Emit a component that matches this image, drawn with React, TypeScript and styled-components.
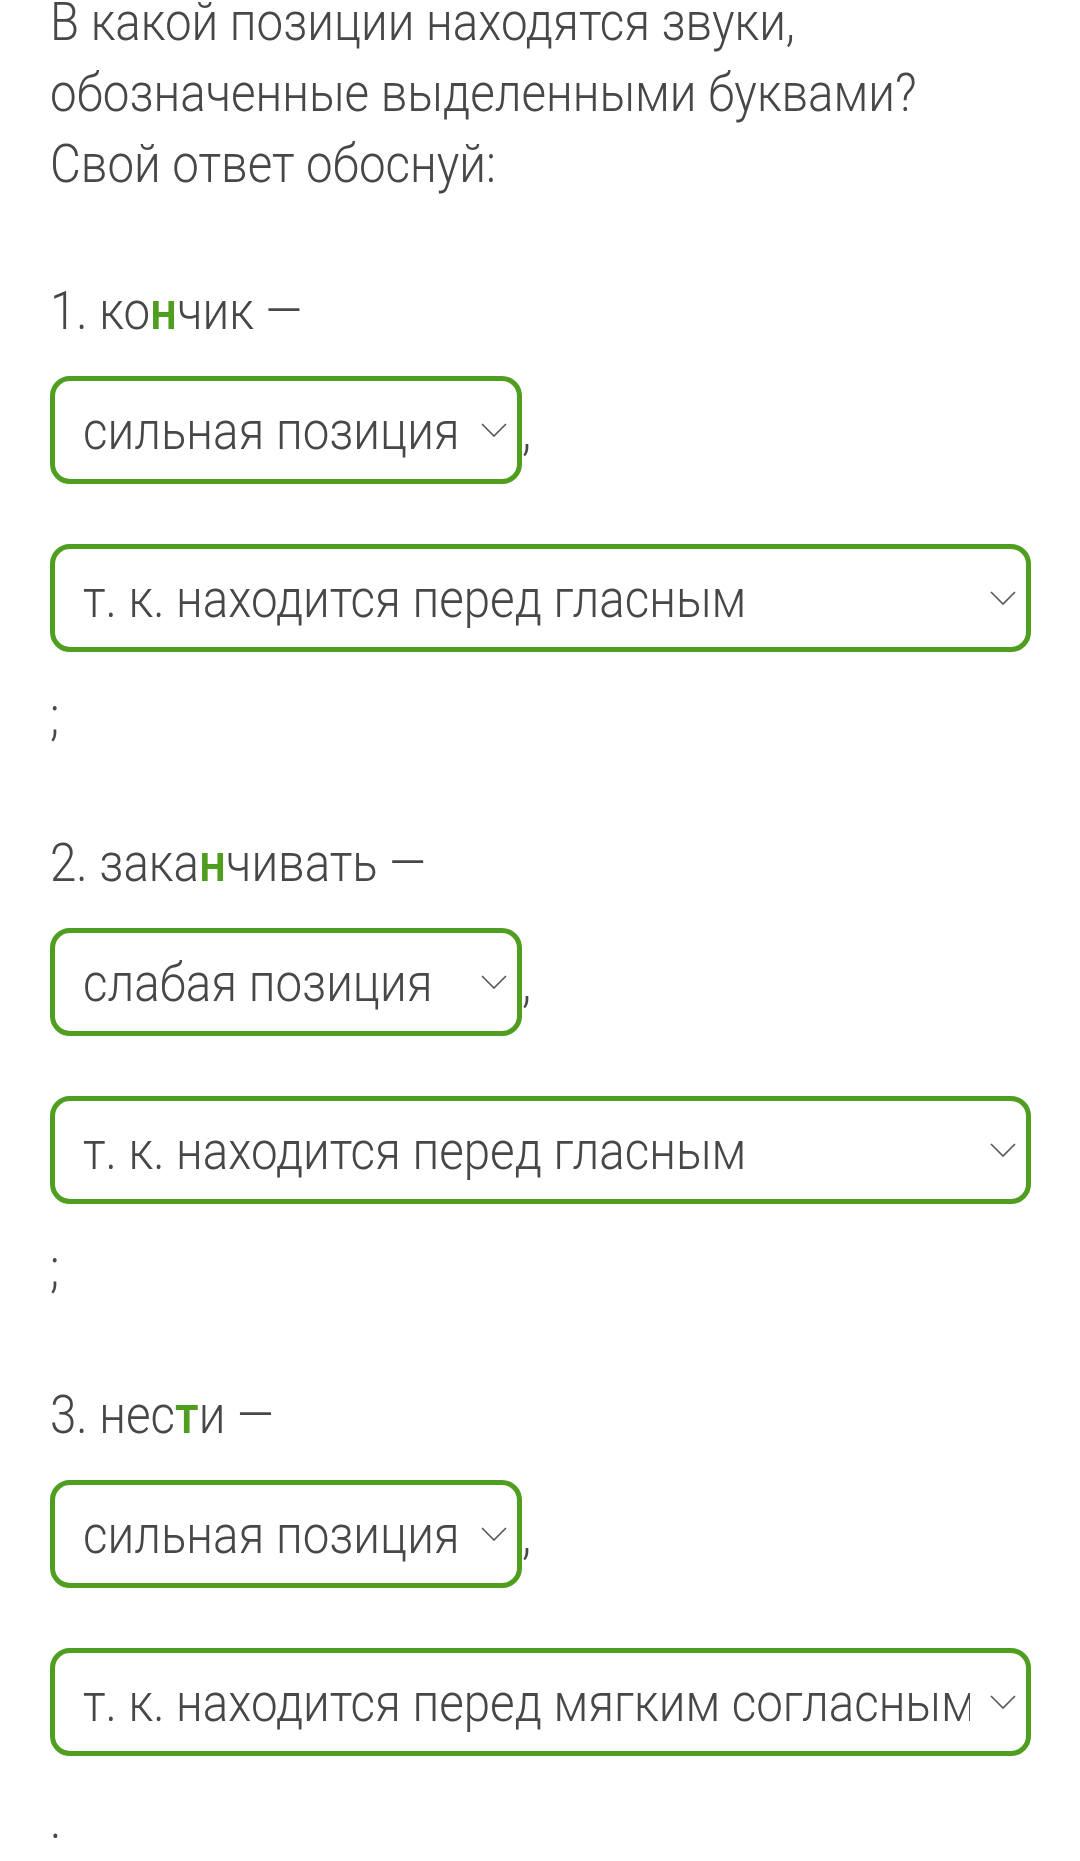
import styled, { createGlobalStyle } from 'styled-components'

const GlobalStyle = createGlobalStyle`
  body {
    margin: 0;
    background: #ffffff;
    font-family: Roboto, "Noto Sans", sans-serif;
    color: #474747;
  }
`

const GREEN = '#4f9e1f'

type Item = {
  num: number
  before: string
  mark: string
  after: string
  position: string
  reason: string
  end: string
}

const items: Item[] = [
  { num: 1, before: 'ко', mark: 'н', after: 'чик', position: 'сильная позиция', reason: 'т. к. находится перед гласным', end: ';' },
  { num: 2, before: 'зака', mark: 'н', after: 'чивать', position: 'слабая позиция', reason: 'т. к. находится перед гласным', end: ';' },
  { num: 3, before: 'нес', mark: 'т', after: 'и', position: 'сильная позиция', reason: 'т. к. находится перед мягким согласным', end: '.' },
]

const App: React.FC = () => {
  return (
    <Page>
      <GlobalStyle />
      <Question>
        <Line><Text>В какой позиции находятся звуки,</Text></Line>
        <Line><Text>обозначенные выделенными буквами?</Text></Line>
        <Line><Text>Свой ответ обоснуй:</Text></Line>
      </Question>
      {items.map((item) => (
        <Task key={item.num}>
          <Line>
            <Text>
              {item.num}. {item.before}
              <Mark>{item.mark}</Mark>
              {item.after} —
            </Text>
          </Line>
          <SelectRow $gap={27}>
            <Select $width={472}>
              <SelectValue><Text>{item.position}</Text></SelectValue>
              <Chevron />
            </Select>
            <Text>,</Text>
          </SelectRow>
          <SelectRow $gap={60}>
            <Select>
              <SelectValue><Text>{item.reason}</Text></SelectValue>
              <Chevron />
            </Select>
          </SelectRow>
          <Punct><Text>{item.end}</Text></Punct>
        </Task>
      ))}
    </Page>
  )
}

const Chevron: React.FC = () => (
  <ChevronIcon viewBox="0 0 26 14" width="26" height="14">
    <polyline points="1,1 13,13 25,1" fill="none" stroke="#555555" strokeWidth="1.6" />
  </ChevronIcon>
)

export default App

const Page = styled.div`
  padding: 0 49px 0 50px;
  font-size: 47.5px;
  font-weight: 300;
  line-height: 71px;
`

const Text = styled.span`
  display: inline-block;
  white-space: nowrap;
  transform: scaleY(1.12);
  transform-origin: left 52px;
`

const Mark = styled.span`
  color: ${GREEN};
  font-weight: 500;
`

const Line = styled.div`
  height: 71px;
`

const Question = styled.div`
  margin-top: -11px;
`

const Task = styled.section`
  margin-top: 76px;
`

const SelectRow = styled.div<{ $gap: number }>`
  display: flex;
  align-items: baseline;
  margin-top: ${(p) => p.$gap}px;
`

const Select = styled.div<{ $width?: number }>`
  box-sizing: border-box;
  display: flex;
  align-items: center;
  width: ${(p) => (p.$width ? `${p.$width}px` : '100%')};
  height: 108px;
  padding: 6px 10px 0 28px;
  border: 5px solid ${GREEN};
  border-radius: 20px;
  background: #ffffff;
`

const SelectValue = styled.div`
  flex: 1;
  min-width: 0;
  overflow: hidden;
  margin-right: 20px;
`

const ChevronIcon = styled.svg`
  flex: none;
  margin-top: -6px;
`

const Punct = styled.div`
  height: 71px;
  margin-top: 31px;
`
